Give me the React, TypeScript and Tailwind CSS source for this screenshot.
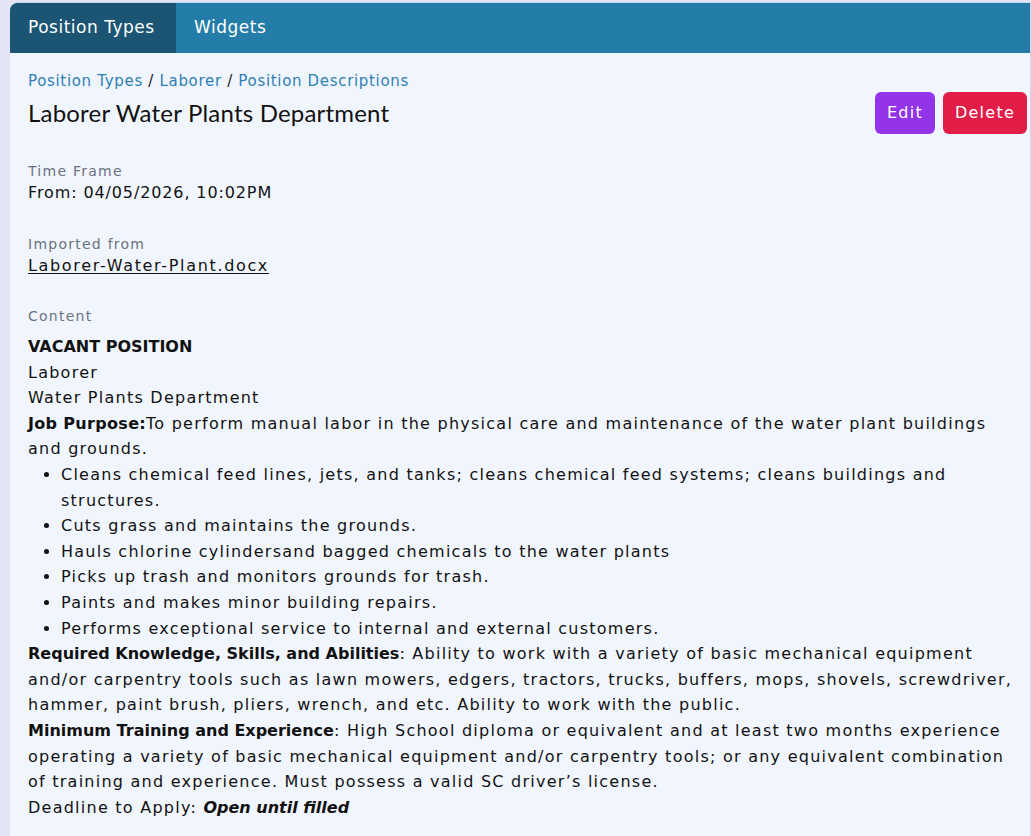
import React from "react";

const body = "font-['DejaVu_Sans',sans-serif] tracking-[0.078em]";

export default function App() {
  return (
    <div className="min-h-[836px] w-full bg-[#e3e5f5] pt-[2px] pl-[10px] overflow-hidden">
      <div className={`min-h-[834px] w-[1021px] bg-[#f1f6fe] rounded-tl-[8px] border-t border-r border-[#c6d8f1] ${body} text-[#111111]`}>
        {/* Tabs */}
        <div className="flex h-[50px] bg-[#247ca8] rounded-tl-[8px] overflow-hidden">
          <div className="flex items-center bg-[#1b5573] px-[18px] w-[166px] whitespace-nowrap text-[17px] tracking-[0.03em] text-white">Position Types</div>
          <div className="flex items-center px-[18px] whitespace-nowrap text-[17px] tracking-[0.03em] text-white">Widgets</div>
        </div>

        <div className="pl-[18px] pr-[3px] pt-[17px]">
          {/* Breadcrumb */}
          <div className="text-[15px] leading-[22px] tracking-[0.045em] text-[#2f7fb5]">
            <span>Position Types</span>
            <span className="text-[#222]"> / </span>
            <span>Laborer</span>
            <span className="text-[#222]"> / </span>
            <span>Position Descriptions</span>
          </div>

          {/* Title row */}
          <div className="flex items-center justify-between h-[42px]">
            <h1 className="font-['Lato',sans-serif] tracking-[0.2px] text-[24px] text-[#111]">Laborer Water Plants Department</h1>
            <div className="flex gap-[8px]">
              <button className="h-[42px] px-[12px] rounded-[6px] bg-[#9333ea] text-white text-[16px]">Edit</button>
              <button className="h-[42px] px-[12px] rounded-[6px] bg-[#e21d48] text-white text-[16px]">Delete</button>
            </div>
          </div>

          <div className="pr-[7px]">
            {/* Time frame */}
            <div className="mt-[26px]">
              <div className="text-[14px] leading-[22px] text-[#6b7280]">Time Frame</div>
              <div className="text-[16px] leading-[22px] tracking-[0.055em]">From: 04/05/2026, 10:02PM</div>
            </div>

            <div className="mt-[29px]">
              <div className="text-[14px] leading-[22px] text-[#6b7280]">Imported from</div>
              <div className="text-[16px] leading-[22px] tracking-[0.104em]">
                <a className="underline underline-offset-2">Laborer-Water-Plant.docx</a>
              </div>
            </div>

            <div className="mt-[28px]">
              <div className="text-[14px] leading-[22px] text-[#6b7280]">Content</div>
              <div className="mt-[7px] text-[16px] leading-[25.6px]">
                <div className="font-bold tracking-normal">VACANT POSITION</div>
                <div>Laborer</div>
                <div>Water Plants Department</div>
                <div>
                  <span className="font-bold tracking-[0.02em]">Job Purpose:</span>To perform manual labor in the physical care and maintenance of the water plant buildings and grounds.
                </div>
                <ul className="list-disc pl-[33px]">
                  <li>Cleans chemical feed lines, jets, and tanks; cleans chemical feed systems; cleans buildings and structures.</li>
                  <li>Cuts grass and maintains the grounds.</li>
                  <li>Hauls chlorine cylindersand bagged chemicals to the water plants</li>
                  <li>Picks up trash and monitors grounds for trash.</li>
                  <li>Paints and makes minor building repairs.</li>
                  <li>Performs exceptional service to internal and external customers.</li>
                </ul>
                <div>
                  <span className="font-bold tracking-normal">Required Knowledge, Skills, and Abilities</span>: Ability to work with a variety of basic mechanical equipment and/or carpentry tools such as lawn mowers, edgers, tractors, trucks, buffers, mops, shovels, screwdriver, hammer, paint brush, pliers, wrench, and etc. Ability to work with the public.
                </div>
                <div>
                  <span className="font-bold tracking-normal">Minimum Training and Experience</span>: High School diploma or equivalent and at least two months experience operating a variety of basic mechanical equipment and/or carpentry tools; or any equivalent combination of training and experience. Must possess a valid SC driver’s license.
                </div>
                <div>
                  Deadline to Apply: <span className="font-bold italic tracking-normal">Open until filled</span>
                </div>
              </div>
            </div>
          </div>
        </div>
      </div>
    </div>
  );
}
